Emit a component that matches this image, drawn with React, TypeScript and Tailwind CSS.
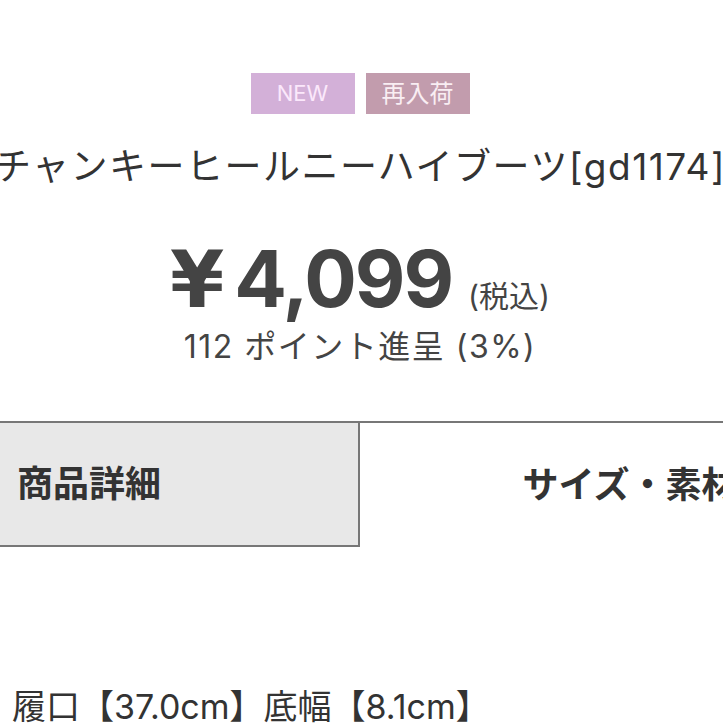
export default function App() {
  return (
    <div
      className="w-[723px] h-[723px] overflow-hidden bg-white text-[#383838]"
      style={{ fontFamily: 'Inter, "Noto Sans CJK JP", sans-serif' }}
    >
      <div className="w-[1080px] -ml-[180px] flex flex-col items-center">
        {/* badges */}
        <div className="mt-[73px] flex gap-[11px]">
          <span className="w-[104px] h-[41px] flex items-center justify-center bg-[#d3b0d8] text-[#fbe8fb] text-[22px]">
            NEW
          </span>
          <span className="w-[104px] h-[41px] flex items-center justify-center bg-[#c29cad] text-[#f9eef3] text-[24px]">
            再入荷
          </span>
        </div>

        {/* title */}
        <h1 className="mt-[27px] whitespace-nowrap text-[37px] leading-[52px] tracking-[1.5px] font-normal text-[#333]">
          チャンキーヒールニーハイブーツ[gd1174]
        </h1>

        {/* price */}
        <div className="mt-[44px] flex items-baseline text-[#444]">
          <span
            className="text-[78px] leading-[84px] font-bold mr-[10px]"
            style={{ fontFamily: '"DejaVu Sans", sans-serif' }}
          >
            ¥
          </span>
          <span className="text-[78px] leading-[84px] font-bold tracking-[-2px]">4,099</span>
          <span className="ml-[16px] text-[30px]">(税込)</span>
        </div>
        <p className="mt-[5px] text-[32px] leading-[40px] tracking-[1.5px] text-[#444]">
          112 ポイント進呈 (3%)
        </p>

        {/* tabs */}
        <div className="mt-[54px] w-full flex border-t-2 border-[#777]">
          <div className="w-[540px] h-[124px] flex items-center justify-center bg-[#e8e8e8] border-r-2 border-b-2 border-[#777]">
            <span className="text-[36px] font-bold text-[#333]">商品詳細</span>
          </div>
          <div className="flex-1 h-[124px] flex items-center justify-center">
            <span className="text-[36px] font-bold text-[#333]">サイズ・素材</span>
          </div>
        </div>

        {/* body */}
        <div className="w-full pl-[192px] mt-[140px]">
          <p className="text-[34px] leading-[40px] text-[#333] whitespace-nowrap">
            履口【37.0cm】底幅【8.1cm】
          </p>
        </div>
      </div>
    </div>
  )
}
